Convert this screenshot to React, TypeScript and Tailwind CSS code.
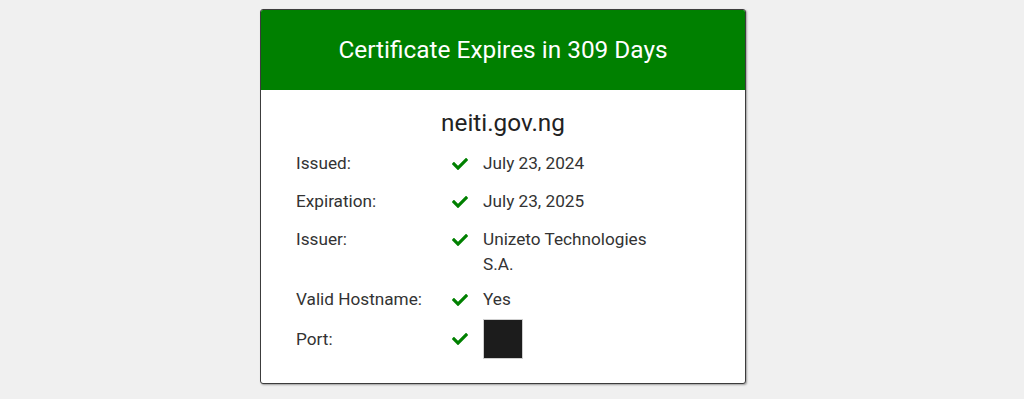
const CheckIcon = () => (
  <svg viewBox="0 0 512 512" className="w-4 h-4 fill-[#008000]">
    <path d="M173.898 439.404l-166.4-166.4c-9.997-9.997-9.997-26.206 0-36.204l36.203-36.204c9.997-9.998 26.207-9.998 36.204 0L192 312.69 432.095 72.596c9.997-9.997 26.207-9.997 36.204 0l36.203 36.204c9.997 9.997 9.997 26.206 0 36.204l-294.4 294.401c-9.998 9.997-26.207 9.997-36.204-.001z" />
  </svg>
);

interface RowProps {
  label: string
  className?: string
  children: React.ReactNode
}

const Row: React.FC<RowProps> = ({ label, className = '', children }) => (
  <div className={`flex ${className}`}>
    <div className="w-[156px] shrink-0">{label}</div>
    <div className="w-[31px] h-[25px] shrink-0 flex items-center">
      <CheckIcon />
    </div>
    <div className="w-[185px]">{children}</div>
  </div>
);

export default function App() {
  return (
    <div className="min-h-[399px] bg-[#f0f0f0] pt-[9px] font-['Roboto',sans-serif]">
      <div className="ml-[260px] w-[486px] h-[375px] bg-white border border-[#3c3c3c] rounded-[3px] shadow-[1px_1px_2px_rgba(0,0,0,0.35)] overflow-hidden">
        <div className="h-[80px] bg-[#008000] flex items-center justify-center text-white text-[24.4px]">
          Certificate Expires in 309 Days
        </div>
        <div className="pt-[17px] text-center text-[24.3px] leading-[32px] text-[#222]">neiti.gov.ng</div>
        <div className="pl-[35px] text-[17.2px] leading-[25px] text-[#333]">
          <Row label="Issued:" className="mt-[12px]">July 23, 2024</Row>
          <Row label="Expiration:" className="mt-[13px]">July 23, 2025</Row>
          <Row label="Issuer:" className="mt-[13px]">Unizeto Technologies S.A.</Row>
          <Row label="Valid Hostname:" className="mt-[10px]">Yes</Row>
          <div className="flex items-center mt-[7px] h-[40px]">
            <div className="w-[156px] shrink-0">Port:</div>
            <div className="w-[31px] shrink-0 flex items-center">
              <CheckIcon />
            </div>
            <div className="w-[40px] h-[40px] bg-[#1c1c1c] border border-[#cfcfcf]" />
          </div>
        </div>
      </div>
    </div>
  );
}
